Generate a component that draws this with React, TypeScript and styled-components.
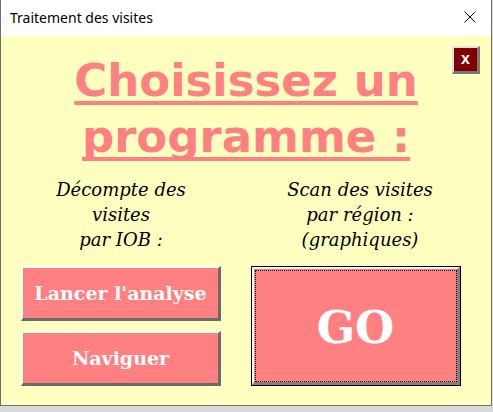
import React from "react";
import styled, { createGlobalStyle } from "styled-components";

const Global = createGlobalStyle`
  html, body { margin: 0; padding: 0; background: #d9d9d9; }
  #root { width: 493px; height: 412px; }
`;

const Window = styled.div`
  width: 490px;
  height: 405px;
  border: 1px solid #6f6f6f;
  border-top: none;
  display: flex;
  flex-direction: column;
  background: #ffffc0;
`;

const TitleBar = styled.div`
  height: 36px;
  flex: none;
  background: #ffffff;
  display: flex;
  align-items: center;
  justify-content: space-between;
  padding: 0 15px 0 9px;
  font-family: "Noto Sans", "Open Sans", sans-serif;
  font-size: 14px;
  color: #000;
`;

const TitleText = styled.span`
  margin-top: -2px;
`;

const CloseIcon = styled.svg`
  width: 12px;
  height: 12px;
  display: block;
  margin-top: -3px;
`;

const Content = styled.div`
  position: relative;
  flex: 1;
  padding: 17px 0 0 20px;
  display: flex;
  flex-direction: column;
`;

const SmallClose = styled.button`
  position: absolute;
  top: 10px;
  right: 11px;
  width: 28px;
  height: 28px;
  padding: 0;
  background: #800000;
  border-style: solid;
  border-width: 2px 3px 3px 2px;
  border-color: #e0e0e0 #7a7a7a #7a7a7a #e0e0e0;
  color: #ffffff;
  font-family: "Liberation Sans", Arial, sans-serif;
  font-weight: bold;
  font-size: 16px;
  line-height: 1;
  display: flex;
  align-items: center;
  justify-content: center;
  padding-bottom: 2px;
`;

const Heading = styled.h1`
  margin: 0 0 0 -20px;
  text-align: center;
  font-family: "DejaVu Sans", sans-serif;
  font-weight: bold;
  font-size: 45px;
  line-height: 56px;
  color: #ff8080;
  text-decoration: underline;
  text-decoration-thickness: 4px;
  text-underline-offset: 5px;
  text-decoration-skip-ink: none;
`;

const Columns = styled.div`
  display: grid;
  grid-template-columns: 200px 210px;
  column-gap: 30px;
  margin-top: 12px;
`;

const Column = styled.div`
  display: flex;
  flex-direction: column;
  align-items: stretch;
`;

const Description = styled.p<{ $shift?: number }>`
  margin: 0 0 14px;
  padding-left: ${(p) => p.$shift ?? 0}px;
  height: 75px;
  text-align: center;
  font-family: "DejaVu Serif", "Liberation Serif", serif;
  font-style: italic;
  font-size: 18px;
  line-height: 25px;
  color: #000;
`;

const ActionButton = styled.button`
  height: 55px;
  margin-bottom: 10px;
  background: #ff8080;
  border-style: solid;
  border-width: 2px 3px 3px 2px;
  border-color: #ffffff #6b6b6b #6b6b6b #ffffff;
  color: #ffffff;
  font-family: "DejaVu Serif", "Liberation Serif", serif;
  font-weight: bold;
  font-size: 19px;
  padding: 0;
`;

const GoButton = styled.button`
  height: 120px;
  padding: 0;
  background: #000;
  border: 1px solid #000;
  display: flex;
`;

const GoFace = styled.span`
  flex: 1;
  display: flex;
  align-items: center;
  justify-content: center;
  background: #ff8080;
  border-style: solid;
  border-width: 2px 3px 3px 2px;
  border-color: #ffffff #808080 #808080 #ffffff;
  outline: 1px dotted #000;
  outline-offset: -4px;
  color: #ffffff;
  font-family: "DejaVu Serif", "Liberation Serif", serif;
  font-weight: bold;
  font-size: 45px;
  padding-top: 4px;
`;

export default function App() {
  return (
    <>
      <Global />
      <Window>
        <TitleBar>
          <TitleText>Traitement des visites</TitleText>
          <CloseIcon viewBox="0 0 12 12">
            <path d="M0.5 0.5 L11.5 11.5 M11.5 0.5 L0.5 11.5" stroke="#000" strokeWidth="1" fill="none" />
          </CloseIcon>
        </TitleBar>
        <Content>
          <SmallClose>x</SmallClose>
          <Heading>
            Choisissez un
            <br />
            programme :
          </Heading>
          <Columns>
            <Column>
              <Description>
                Décompte des
                <br />
                visites
                <br />
                par IOB :
              </Description>
              <ActionButton>Lancer l'analyse</ActionButton>
              <ActionButton>Naviguer</ActionButton>
            </Column>
            <Column>
              <Description $shift={8}>
                Scan des visites
                <br />
                par région :
                <br />
                (graphiques)
              </Description>
              <GoButton>
                <GoFace>GO</GoFace>
              </GoButton>
            </Column>
          </Columns>
        </Content>
      </Window>
    </>
  );
}
